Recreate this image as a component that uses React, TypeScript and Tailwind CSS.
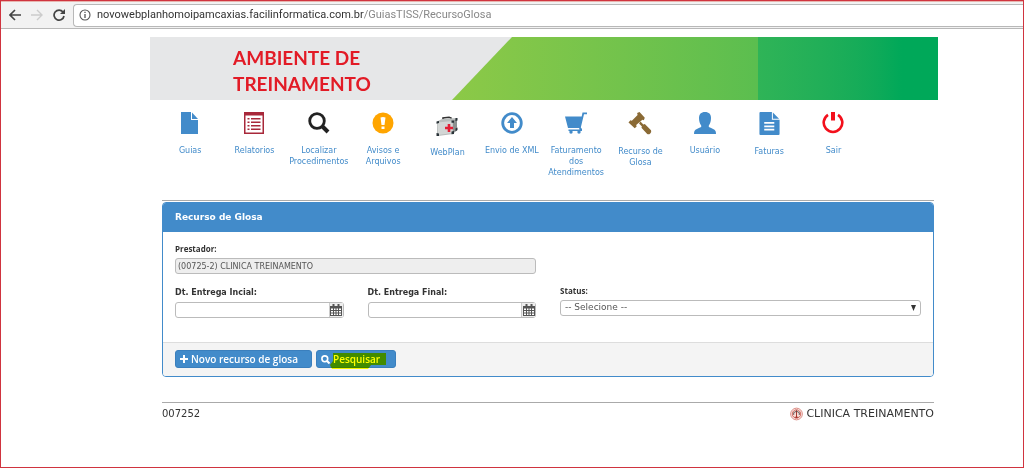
import React, { useState } from "react";

interface MenuItem {
  label: string;
  icon: React.ReactNode;
}

const FileIcon = () => (
  <svg width="18" height="22" viewBox="0 0 18 22" fill="#428bca">
    <path d="M0 0h10v8h7v14H0z" />
    <path d="M11 0.500L17 7h-6z" />
  </svg>
);

const ListIcon = () => (
  <svg width="20" height="22" viewBox="0 0 20 22">
    <path d="M0 0h20v22H0z" fill="#a8283a" />
    <path d="M1.500 3.500h17v17h-17z" fill="#fff" />
    <path
      d="M3.500 6h2v1.500h-2zM7 6h9.500v1.500H7zM3.500 9.500h2V11h-2zM7 9.500h9.500V11H7zM3.500 13h2v1.500h-2zM7 13h9.500v1.500H7zM3.500 16.500h2V18h-2zM7 16.500h9.500V18H7z"
      fill="#a8283a"
    />
  </svg>
);

const SearchIcon = () => (
  <svg width="22" height="22" viewBox="0 0 22 22" fill="none" stroke="#222">
    <circle cx="9" cy="9" r="7.300" strokeWidth="2.800" />
    <path d="M14 14l6 6" strokeWidth="4" />
  </svg>
);

const WarningIcon = () => (
  <svg width="22" height="22" viewBox="0 0 22 22">
    <circle cx="11" cy="11" r="10.500" fill="#ffa500" />
    <path d="M8.500 5.500q2.500-1 5 0l-1 7.500h-3zM9.500 14.500h3V17h-3z" fill="#fff" />
  </svg>
);

const KitIcon = () => (
  <svg width="22" height="24" viewBox="0 0 22 24">
    <path d="M7 7.500V6l6-.8 2 .8v1.500" fill="none" stroke="#333" strokeWidth="1.600" />
    <path d="M1 9.500L6 7l15-1v12l-4 4L2 24l-1-1z" fill="#b9bdbc" />
    <path d="M1.500 10.500L16.500 9v12L2 23z" fill="#d3d6d5" />
    <path d="M17 9l4-2.500v11L17 21.500z" fill="#8d9190" />
    <path
      d="M.500 9.500L3 9v2l-2.500.8zM15.500 8.500H18v2.200h-2.500zM19.500 6H21.500v2.500l-2 .5zM.500 21l2.500.5V24H.500zM15.500 19.500L18 19v3l-2.500.3zM19.500 16.500l2-1V18l-2 1.500z"
      fill="#2a3338"
    />
    <path d="M11.700 12h2.600v2.700H17v2.600h-2.700V20h-2.600v-2.700H9v-2.600h2.700z" fill="#e21e35" />
  </svg>
);

const UploadIcon = () => (
  <svg width="22" height="22" viewBox="0 0 22 22">
    <circle cx="11" cy="11" r="9.300" fill="none" stroke="#428bca" strokeWidth="2.800" />
    <path d="M11 5l5 6h-3v5H9v-5H6z" fill="#428bca" />
  </svg>
);

const CartIcon = () => (
  <svg width="22" height="22" viewBox="0 0 22 22" fill="#428bca">
    <path d="M0 4.500h16.700l.8-4H22v1.800h-3L15.800 15.500 17 17v2H3.500v-1.500h11l-.4-1.500H3z" />
    <circle cx="6" cy="20" r="1.700" />
    <circle cx="14" cy="20" r="1.700" />
  </svg>
);

const GavelIcon = () => (
  <svg width="24" height="23" viewBox="0 0 24 24" fill="#8a6a35">
    <path d="M9 1l2.500-1L17 6l-1 2.500L14.500 8 8 13.500l.5 1.500L6.500 17 0 11l2-2.500 1.500.5L9.500 3z" />
    <path d="M12.500 10l3 3 1.500-.5 6.500 6.500q.8 2-.8 3.400-1.500 1.400-3.200.6L13.500 16.500l.5-1.500-3-3z" />
  </svg>
);

const UserIcon = () => (
  <svg width="22" height="22" viewBox="0 0 22 22" fill="#428bca">
    <path d="M11 0c4 0 6 2.300 6 6 0 3-.8 5.500-2.200 7.500v1.500c3.500 1.500 5.700 2.300 6.700 4q.5 1 .5 3H0q0-2 .5-3c1-1.700 3.200-2.500 6.700-4v-1.500C5.800 11.500 5 9 5 6c0-3.700 2-6 6-6z" />
  </svg>
);

const InvoiceIcon = () => (
  <svg width="21" height="23" viewBox="0 0 21 24">
    <path d="M1 0h12v8h8v15q0 1-1 1H1q-1 0-1-1V1q0-1 1-1z" fill="#428bca" />
    <path d="M14 0.500L20.500 7H14z" fill="#428bca" />
    <path d="M5 10.500h10.500v1.800H5zM5 14h10.500v1.800H5zM5 17.500h10.500v1.800H5z" fill="#fff" />
  </svg>
);

const PowerIcon = () => (
  <svg width="22" height="22" viewBox="0 0 22 22" fill="none" stroke="#f3101c">
    <path d="M6 2.800a9.300 9.300 0 1 0 10 0" strokeWidth="2.600" />
    <path d="M11 0v8.500" strokeWidth="4" />
  </svg>
);

const CalendarIcon = () => (
  <svg width="12" height="12" viewBox="0 0 12 12">
    <path d="M0 2h12v10H0z" fill="#555" />
    <path d="M2.500 0h2v3h-2zM7.500 0h2v3h-2z" fill="#555" />
    <path
      d="M1 4.500h2v1.500H1zM4 4.500h1.500v1.500H4zM6.500 4.500H8v1.500H6.500zM9 4.500h2v1.500H9zM1 7h2v1.500H1zM4 7h1.500v1.500H4zM6.500 7H8v1.500H6.500zM9 7h2v1.500H9zM1 9.500h2V11H1zM4 9.500h1.500V11H4zM6.500 9.500H8V11H6.500zM9 9.500h2V11H9z"
      fill="#fff"
    />
  </svg>
);

const ClinicLogo = () => (
  <svg width="13" height="14" viewBox="0 0 14 14" fill="none" stroke="#c8483c">
    <circle cx="7" cy="7" r="6.300" strokeWidth="0.700" />
    <circle cx="7" cy="7" r="4.600" strokeWidth="0.900" fill="#f9ddd7" />
    <path d="M7 3v8M5 10.500h4" strokeWidth="1" stroke="#a02820" />
    <path d="M4 8V5.500L7 4l3 1.500V8" strokeWidth="0.900" stroke="#444" />
  </svg>
);

const menu: MenuItem[] = [
  { label: "Guias", icon: <FileIcon /> },
  { label: "Relatorios", icon: <ListIcon /> },
  { label: "Localizar Procedimentos", icon: <SearchIcon /> },
  { label: "Avisos e Arquivos", icon: <WarningIcon /> },
  { label: "WebPlan", icon: <KitIcon /> },
  { label: "Envio de XML", icon: <UploadIcon /> },
  { label: "Faturamento dos Atendimentos", icon: <CartIcon /> },
  { label: "Recurso de Glosa", icon: <GavelIcon /> },
  { label: "Usuário", icon: <UserIcon /> },
  { label: "Faturas", icon: <InvoiceIcon /> },
  { label: "Sair", icon: <PowerIcon /> },
];

function BrowserBar() {
  const [url] = useState({
    host: "novowebplanhomoipamcaxias.facilinformatica.com.br",
    path: "/GuiasTISS/RecursoGlosa",
  });

  return (
    <div className="flex h-7 items-center border-t border-b border-t-[#e8b4ae] border-b-[#b8b8b8] bg-[#f2f2f2] pl-1">
      <button aria-label="Voltar" className="w-[22px] pl-1">
        <svg width="12" height="12" viewBox="0 0 12 12" fill="none" stroke="#444" strokeWidth="1.600">
          <path d="M12 6H1.500M6 1L1 6l5 5" />
        </svg>
      </button>
      <button aria-label="Avançar" className="w-[22px] pl-1">
        <svg width="12" height="12" viewBox="0 0 12 12" fill="none" stroke="#ccc" strokeWidth="1.400">
          <path d="M0 6h10.500M6 1l5 5-5 5" />
        </svg>
      </button>
      <button aria-label="Recarregar" className="w-6 pl-1">
        <svg width="12" height="12" viewBox="0 0 12 12">
          <path d="M10 3A5 5 0 1 0 11 7" fill="none" stroke="#444" strokeWidth="1.700" />
          <path d="M12 0v5H7z" fill="#444" />
        </svg>
      </button>
      <div className="flex h-[23px] flex-1 items-center rounded-l-sm border border-r-0 border-[#b8b8b8] bg-white pl-[5px] font-[Roboto,sans-serif] text-[11px]">
        <svg width="12" height="12" viewBox="0 0 12 12" fill="none" stroke="#555">
          <circle cx="6" cy="6" r="5" strokeWidth="1.100" />
          <path d="M6 5v4M6 2.800v1.300" strokeWidth="1.300" />
        </svg>
        <span className="ml-[6px] text-[#333]">{url.host}</span>
        <span className="text-[#888]">{url.path}</span>
      </div>
    </div>
  );
}

function DateField({ id, label }: { id: string; label: string }) {
  return (
    <div>
      <label htmlFor={id} className="block h-4 leading-[14px] font-bold">
        {label}
      </label>
      <div className="flex h-4 rounded-[3px] border border-[#bbb]">
        <input id={id} className="min-w-0 flex-1 px-1 outline-none" />
        <button
          aria-label="Abrir calendário"
          className="flex w-[14px] items-center justify-center border-l border-[#ccc] bg-[#eee]"
        >
          <CalendarIcon />
        </button>
      </div>
    </div>
  );
}

export default function App() {
  const [status, setStatus] = useState("");

  return (
    <div className="min-h-screen border border-[#d0343f] bg-white font-['DejaVu_Sans',sans-serif] text-[#333]">
      <BrowserBar />

      <main className="mr-[85px] ml-[149px] pt-2">
        <header className="flex h-[63px] bg-[#e6e7e8]">
          <h1 className="w-[302px] pt-2 pl-[83px] font-[Lato,sans-serif] text-[19px] leading-[26px] font-bold text-[#e21b26]">
            AMBIENTE DE
            <br />
            TREINAMENTO
          </h1>
          <div className="flex-1 bg-linear-to-r from-[#8cc947] to-[#5bbe4f] [clip-path:polygon(60px_0,100%_0,100%_100%,0_100%)]" />
          <div className="w-[180px] bg-linear-to-r from-[#2fb457] to-[#00a859] to-80%" />
        </header>

        <nav className="grid grid-cols-12 px-2 pt-3">
          {menu.map((item) => (
            <a
              key={item.label}
              href="#"
              className="flex flex-col items-center text-center text-[8px] leading-[11px] text-[#428bca]"
            >
              <span className="mb-[11px]">{item.icon}</span>
              {item.label}
            </a>
          ))}
        </nav>

        <div className="mt-[22px] mr-1 ml-3 border-t border-[#aaa] pt-px">
          <section className="overflow-hidden rounded border border-[#428bca]">
            <h2 className="bg-[#428bca] px-3 py-2 text-[9px] leading-[13px] font-bold text-white">
              Recurso de Glosa
            </h2>
            <form onSubmit={(e) => e.preventDefault()} className="text-[8px]">
              <div className="grid grid-cols-4 gap-x-6 gap-y-3 px-3 pt-[11px] pb-6">
                <div className="col-span-2">
                  <label
                    htmlFor="prestador"
                    className="block h-[15px] font-['Open_Sans',sans-serif] leading-3 font-bold"
                  >
                    Prestador:
                  </label>
                  <input
                    id="prestador"
                    readOnly
                    value="(00725-2) CLINICA TREINAMENTO"
                    className="block h-4 w-full rounded-[3px] border border-[#bbb] bg-[#eee] px-[2px] text-[#555] outline-none"
                  />
                </div>
                <div className="col-span-2" />
                <DateField id="entregaInicial" label="Dt. Entrega Incial:" />
                <DateField id="entregaFinal" label="Dt. Entrega Final:" />
                <div className="col-span-2">
                  <label
                    htmlFor="status"
                    className="block h-[14px] font-['Open_Sans',sans-serif] leading-[10px] font-bold"
                  >
                    Status:
                  </label>
                  <div className="relative">
                    <select
                      id="status"
                      value={status}
                      onChange={(e) => setStatus(e.target.value)}
                      className="block h-4 w-full appearance-none rounded-[3px] border border-[#bbb] bg-white px-1 text-[9px] text-[#555]"
                    >
                      <option value="">-- Selecione --</option>
                    </select>
                    <svg
                      className="pointer-events-none absolute top-[5px] right-[5px]"
                      width="5"
                      height="6"
                      viewBox="0 0 5 6"
                      fill="#333"
                    >
                      <path d="M0 0h5L2.500 6z" />
                    </svg>
                  </div>
                </div>
              </div>

              <div className="flex gap-1 border-t border-[#ddd] bg-[#f4f4f4] px-3 pt-[7px] pb-2 font-['Open_Sans',sans-serif] text-[10px] font-semibold text-white">
                <button
                  type="button"
                  className="flex h-[18px] w-[137px] items-center gap-[3px] rounded-[3px] border border-[#3a7fbd] bg-[#428bca] px-1"
                >
                  <svg width="8" height="8" viewBox="0 0 8 8" fill="#fff">
                    <path d="M3 0h2v3h3v2H5v3H3V5H0V3h3z" />
                  </svg>
                  Novo recurso de glosa
                </button>
                <button
                  type="submit"
                  className="relative flex h-[18px] w-20 items-center gap-[3px] rounded-[3px] border border-[#3a7fbd] bg-[#428bca] px-1"
                >
                  <svg width="9" height="9" viewBox="0 0 9 9" fill="none" stroke="#fff">
                    <circle cx="3.800" cy="3.800" r="2.900" strokeWidth="1.600" />
                    <path d="M5.800 5.800L8.500 8.500" strokeWidth="2" />
                  </svg>
                  Pesquisar
                  <svg
                    className="pointer-events-none absolute top-0 left-3 mix-blend-multiply"
                    width="58"
                    height="18"
                    viewBox="0 0 58 18"
                    fill="#ff0"
                  >
                    <path d="M4 2h53v12H42l-3 4H3l-2-4 3-4z" />
                  </svg>
                </button>
              </div>
            </form>
          </section>
        </div>

        <footer className="mt-[25px] mr-1 ml-3 flex justify-between border-t border-[#aaa] pt-1 text-[10px] leading-[14px]">
          <span>007252</span>
          <span className="flex items-center gap-[3px] text-[11px]">
            <ClinicLogo />
            CLINICA TREINAMENTO
          </span>
        </footer>
      </main>
    </div>
  );
}
